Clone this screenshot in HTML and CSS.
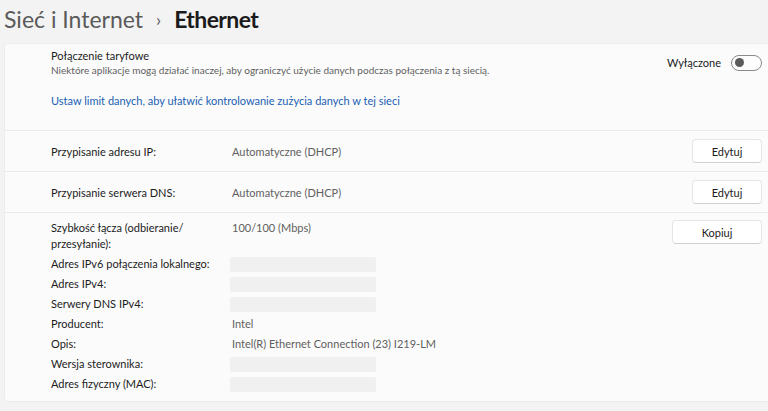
FILE: index.html
```html
<!DOCTYPE html>
<html lang="pl">
<head>
    <meta charset="UTF-8">
    <meta name="viewport" content="width=device-width, initial-scale=1.0">
    <title>Ethernet</title>
    <link rel="stylesheet" href="styles.css">
</head>
<body>
    <div class="page">
        <h1 class="breadcrumb">
            <span class="crumb-parent">Sieć i Internet</span>
            <span class="crumb-sep">&#8250;</span>
            <span class="crumb-current">Ethernet</span>
        </h1>

        <div class="card">
            <!-- Metered connection -->
            <div class="row row-metered">
                <div class="metered-top">
                    <div class="metered-text">
                        <div class="row-title">Połączenie taryfowe</div>
                        <div class="row-desc">Niektóre aplikacje mogą działać inaczej, aby ograniczyć użycie danych podczas połączenia z tą siecią.</div>
                    </div>
                    <div class="toggle-wrap">
                        <span class="toggle-label">Wyłączone</span>
                        <span class="toggle"><span class="knob"></span></span>
                    </div>
                </div>
                <a class="link" href="#">Ustaw limit danych, aby ułatwić kontrolowanie zużycia danych w tej sieci</a>
            </div>

            <!-- IP assignment -->
            <div class="row row-setting">
                <span class="label">Przypisanie adresu IP:</span>
                <span class="value">Automatyczne (DHCP)</span>
                <button class="btn btn-edit">Edytuj</button>
            </div>

            <!-- DNS assignment -->
            <div class="row row-setting">
                <span class="label">Przypisanie serwera DNS:</span>
                <span class="value">Automatyczne (DHCP)</span>
                <button class="btn btn-edit">Edytuj</button>
            </div>

            <!-- Properties -->
            <div class="row row-props">
                <div class="props">
                    <span class="label">Szybkość łącza (odbieranie/<br>przesyłanie):</span>
                    <span class="value">100/100 (Mbps)</span>

                    <span class="label">Adres IPv6 połączenia lokalnego:</span>
                    <span class="value"><span class="hidden-value"></span></span>

                    <span class="label">Adres IPv4:</span>
                    <span class="value"><span class="hidden-value"></span></span>

                    <span class="label">Serwery DNS IPv4:</span>
                    <span class="value"><span class="hidden-value"></span></span>

                    <span class="label">Producent:</span>
                    <span class="value">Intel</span>

                    <span class="label">Opis:</span>
                    <span class="value">Intel(R) Ethernet Connection (23) I219-LM</span>

                    <span class="label">Wersja sterownika:</span>
                    <span class="value"><span class="hidden-value"></span></span>

                    <span class="label">Adres fizyczny (MAC):</span>
                    <span class="value"><span class="hidden-value"></span></span>
                </div>
                <button class="btn btn-copy">Kopiuj</button>
            </div>
        </div>
    </div>
</body>
</html>
```

FILE: styles.css
```css
* {
    margin: 0;
    padding: 0;
    box-sizing: border-box;
}

body {
    font-family: Lato, 'Noto Sans', sans-serif;
    font-size: 11px;
    color: #1b1b1b;
    background: #f3f3f3;
    overflow: hidden;
}

.page {
    padding-left: 4px;
}

.breadcrumb {
    height: 43px;
    display: flex;
    align-items: center;
    gap: 10px;
    font-size: 23px;
    font-weight: 400;
    padding-bottom: 5px;
}

.crumb-parent {
    color: #5a5a5a;
}

.crumb-sep {
    color: #5a5a5a;
    font-size: 18px;
    margin: 0 3px;
}

.crumb-current {
    font-weight: 700;
    letter-spacing: -0.6px;
    color: #1b1b1b;
}

.card {
    background: #fbfbfb;
    border-radius: 4px 0 0 4px;
    border: 1px solid #ececec;
    border-right: none;
}

.row {
    border-bottom: 1px solid #ebebeb;
    padding: 0 6px 0 46px;
}

.row:last-child {
    border-bottom: none;
}

/* metered */
.row-metered {
    height: 87px;
    padding-top: 4px;
}

.metered-top {
    display: flex;
    align-items: center;
}

.metered-text {
    flex: 1;
}

.row-title {
    font-size: 11px;
    line-height: 15px;
}

.row-desc {
    font-size: 10px;
    line-height: 14px;
    color: #5f5f5f;
}

.toggle-wrap {
    display: flex;
    align-items: center;
    gap: 10px;
}

.toggle {
    width: 31px;
    height: 16px;
    border: 1px solid #8a8a8a;
    border-radius: 8px;
    background: #fdfdfd;
    display: flex;
    align-items: center;
    padding-left: 3px;
}

.knob {
    width: 9px;
    height: 9px;
    border-radius: 50%;
    background: #5b5b5b;
}

.link {
    display: block;
    margin-top: 16px;
    color: #1a5fb4;
    text-decoration: none;
    line-height: 16px;
}

/* settings rows */
.row-setting {
    height: 41px;
    display: flex;
    align-items: center;
}

.label {
    width: 181px;
    flex-shrink: 0;
}

.value {
    color: #5f5f5f;
    flex: 1;
}

.btn {
    height: 24px;
    background: #ffffff;
    border: 1px solid #e5e5e5;
    border-bottom-color: #d0d0d0;
    border-radius: 4px;
    font-family: inherit;
    font-size: 11px;
    color: #1b1b1b;
}

.btn-edit {
    width: 70px;
}

.btn-copy {
    width: 90px;
}

/* properties */
.row-props {
    display: flex;
    align-items: flex-start;
    padding-top: 7px;
    padding-bottom: 9px;
}

.props {
    flex: 1;
    display: grid;
    grid-template-columns: 181px 1fr;
    row-gap: 4px;
    line-height: 16px;
}

.props .label {
    color: #1b1b1b;
}

.hidden-value {
    display: block;
    width: 146px;
    height: 15px;
    margin-top: 1px;
    margin-left: -2px;
    background: #f0f0f0;
    border-radius: 2px;
    filter: blur(0.6px);
}
```
